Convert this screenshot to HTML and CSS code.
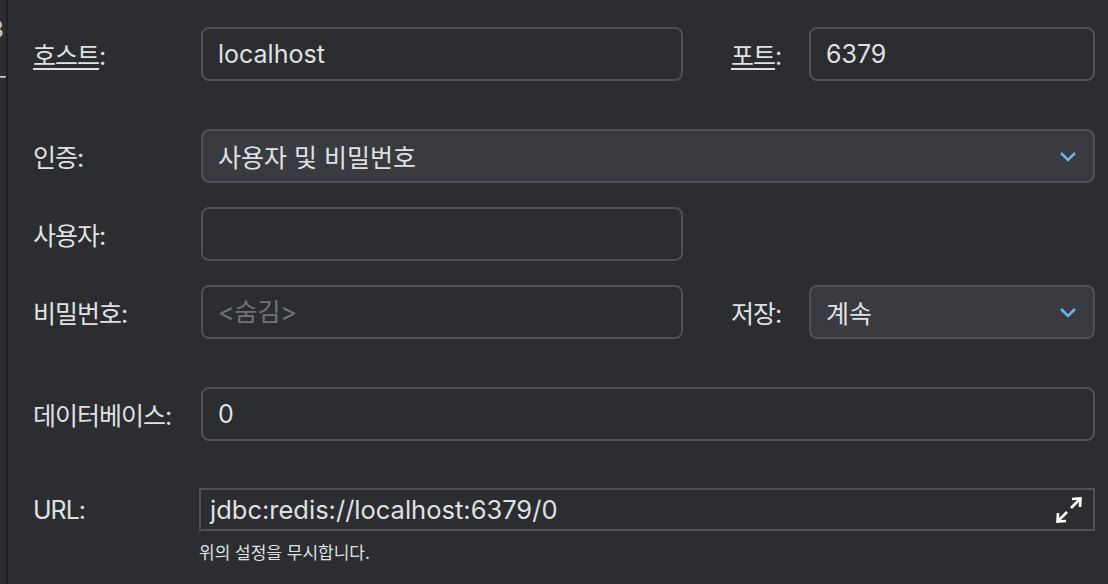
FILE: index.html
```html
<!DOCTYPE html>
<html>
  <head>
    <title>Redis 연결 설정</title>
    <link rel="stylesheet" href="styles.css">
  </head>
  <body>
    <div class="window">
      <div class="side">
        <span class="side-digit">3</span>
        <span class="side-dash">-</span>
      </div>
      <div class="form">
        <div class="row">
          <label class="label"><u>호스트</u>:</label>
          <input class="field half" type="text" value="localhost">
          <label class="label small"><u>포트</u>:</label>
          <input class="field port" type="text" value="6379">
        </div>

        <div class="row spaced">
          <label class="label">인증:</label>
          <div class="combo wide">
            <span>사용자 및 비밀번호</span>
            <svg class="chevron" width="18" height="12" viewBox="0 0 18 12"><polyline points="2,2 9,9 16,2" fill="none" stroke="#6cb3ea" stroke-width="2.6"/></svg>
          </div>
        </div>

        <div class="row">
          <label class="label">사용자:</label>
          <input class="field half" type="text" value="">
        </div>

        <div class="row">
          <label class="label">비밀번호:</label>
          <input class="field half" type="password" placeholder="<숨김>">
          <label class="label small">저장:</label>
          <div class="combo port">
            <span>계속</span>
            <svg class="chevron" width="18" height="12" viewBox="0 0 18 12"><polyline points="2,2 9,9 16,2" fill="none" stroke="#6cb3ea" stroke-width="2.6"/></svg>
          </div>
        </div>

        <div class="row spaced">
          <label class="label">데이터베이스:</label>
          <input class="field wide" type="text" value="0">
        </div>

        <div class="row spaced url-row">
          <label class="label">URL:</label>
          <div class="url wide">
            <span>jdbc:redis://localhost:6379/0</span>
            <svg class="expand" width="26" height="26" viewBox="0 0 26 26">
              <g fill="none" stroke="#ffffff" stroke-width="2.6">
                <line x1="15" y1="11" x2="24" y2="2"/>
                <polyline points="16,2 24.5,1.5 24,10"/>
                <line x1="11" y1="15" x2="2" y2="24"/>
                <polyline points="2,16 1.5,24.5 10,24"/>
              </g>
            </svg>
          </div>
        </div>
        <p class="hint">위의 설정을 무시합니다.</p>
      </div>
    </div>
  </body>
</html>
```

FILE: styles.css
```css
html, body {
  margin: 0;
  height: 100%;
  background-color: #2b2d30;
}

body {
  font-family: Inter, "Noto Sans CJK KR", sans-serif;
  font-size: 25px;
  color: #dfe1e5;
  overflow: hidden;
}

.window {
  display: flex;
  height: 100%;
}

.side {
  width: 6px;
  border-right: 2px solid #1e1f22;
  overflow: hidden;
  display: flex;
  flex-direction: column;
  color: #c9ccd1;
}

.side-digit {
  font-size: 24px;
  margin-top: 18px;
  margin-left: -11px;
  line-height: 24px;
}

.side-dash {
  margin-top: 24px;
  margin-left: -2px;
  font-size: 20px;
  line-height: 20px;
}

.form {
  flex: 1;
  padding: 27px 13px 0 25px;
  display: flex;
  flex-direction: column;
}

.row {
  display: flex;
  align-items: center;
  margin-top: 24px;
}

.row:first-child {
  margin-top: 0;
}

.row.spaced {
  margin-top: 48px;
}

.row.url-row {
  margin-top: 47px;
}

.label {
  width: 168px;
  flex-shrink: 0;
  letter-spacing: -0.04em;
}

.label u {
  text-decoration-thickness: 2px;
  text-underline-offset: 3px;
}

.label.small {
  width: 78px;
  margin-left: 48px;
}

.field, .combo {
  box-sizing: border-box;
  height: 54px;
  border: 2px solid #4e5157;
  border-radius: 8px;
  font: inherit;
  color: #dfe1e5;
  padding: 0 15px;
  outline: none;
}

.field {
  background-color: #2b2d30;
}

.field::placeholder {
  color: #6f737a;
}

.half {
  width: 482px;
}

.port {
  width: 286px;
}

.wide {
  flex: 1;
}

.combo {
  background-color: #393b40;
  display: flex;
  align-items: center;
  justify-content: space-between;
}

.chevron {
  margin-right: 1px;
  margin-top: 2px;
}

.url {
  box-sizing: border-box;
  height: 43px;
  border: 2px solid #4e5157;
  margin-left: -2px;
  padding: 0 11px 0 9px;
  display: flex;
  align-items: center;
  justify-content: space-between;
  font-size: 25.5px;
}

.expand {
  margin-top: 1px;
}

.hint {
  margin: 8px 0 0 166px;
  font-size: 17px;
}
```
